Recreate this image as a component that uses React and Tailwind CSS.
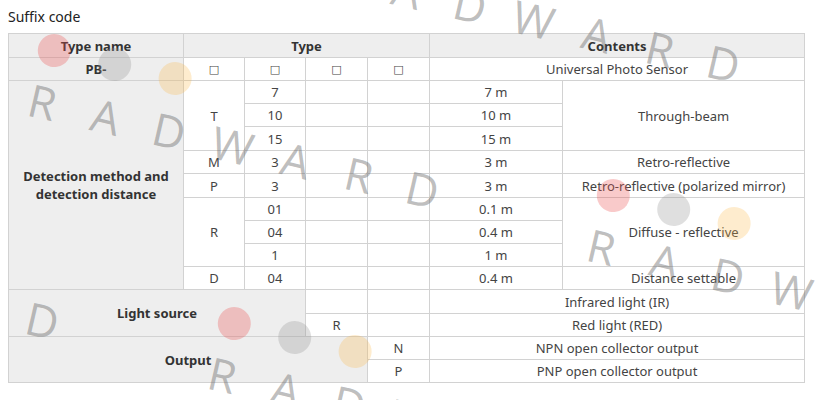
import React from "react";

const cell = "border border-[#d2d2d2] p-0 text-center align-middle";
const gray = "bg-[#eeeeee] font-bold text-[#333]";

const marks = [
  "left-[16px] top-[72px]",
  "left-[575px] top-[217px]",
  "left-[196px] top-[345px]",
  "left-[317px] top-[-54px]",
  "left-[-364px] top-[203px]",
];

const Mark = ({ pos }) => (
  <div className={`absolute ${pos} origin-top-left rotate-[13deg]`}>
    <div className="relative">
      <div className="absolute left-[16px] top-[-46px] flex gap-[29px]">
        <div className="w-[33px] h-[33px] rounded-full bg-[rgba(235,80,80,0.3)]" />
        <div className="w-[33px] h-[33px] rounded-full bg-[rgba(150,150,150,0.3)]" />
        <div className="w-[33px] h-[33px] rounded-full bg-[rgba(250,180,60,0.25)]" />
      </div>
      <div className="flex text-[45px] leading-[46px] text-[rgba(110,110,110,0.45)] font-['Open_Sans',sans-serif]">
        {"RADWARD".split("").map((c, i) => (
          <span key={i} className="w-[65px] text-center">
            {c}
          </span>
        ))}
      </div>
    </div>
  </div>
);

const Box = () => <span className="font-['DejaVu_Sans',sans-serif] text-[11px]">□</span>;

export default function App() {
  return (
    <div className="relative w-[835px] h-[400px] overflow-hidden bg-white font-['Noto_Sans',sans-serif] text-[#444]">
      <div className="pl-2 pt-[8px]">
        <div className="h-[25px] text-[14px] leading-[18px] text-[#222]">Suffix code</div>
        <table className="table-fixed border-collapse w-[796px] text-[13px] leading-[16px]">
          <colgroup>
            <col className="w-[175px]" />
            <col className="w-[61px]" />
            <col className="w-[61px]" />
            <col className="w-[62px]" />
            <col className="w-[62px]" />
            <col className="w-[133px]" />
            <col className="w-[242px]" />
          </colgroup>
          <tbody>
            <tr className="h-[24px]">
              <td className={`${cell} ${gray}`}>Type name</td>
              <td colSpan={4} className={`${cell} ${gray}`}>Type</td>
              <td colSpan={2} className={`${cell} ${gray}`}>Contents</td>
            </tr>
            <tr className="h-[23px]">
              <td className={`${cell} ${gray}`}>PB-</td>
              <td className={cell}><Box /></td>
              <td className={cell}><Box /></td>
              <td className={cell}><Box /></td>
              <td className={cell}><Box /></td>
              <td colSpan={2} className={cell}>Universal Photo Sensor</td>
            </tr>
            <tr className="h-[23px]">
              <td rowSpan={9} className={`${cell} ${gray} leading-[18px]`}>
                Detection method and
                <br />
                detection distance
              </td>
              <td rowSpan={3} className={cell}>T</td>
              <td className={cell}>7</td>
              <td className={cell}></td>
              <td className={cell}></td>
              <td className={cell}>7 m</td>
              <td rowSpan={3} className={cell}>Through-beam</td>
            </tr>
            <tr className="h-[23px]">
              <td className={cell}>10</td>
              <td className={cell}></td>
              <td className={cell}></td>
              <td className={cell}>10 m</td>
            </tr>
            <tr className="h-[24px]">
              <td className={cell}>15</td>
              <td className={cell}></td>
              <td className={cell}></td>
              <td className={cell}>15 m</td>
            </tr>
            <tr className="h-[23px]">
              <td className={cell}>M</td>
              <td className={cell}>3</td>
              <td className={cell}></td>
              <td className={cell}></td>
              <td className={cell}>3 m</td>
              <td className={cell}>Retro-reflective</td>
            </tr>
            <tr className="h-[24px]">
              <td className={cell}>P</td>
              <td className={cell}>3</td>
              <td className={cell}></td>
              <td className={cell}></td>
              <td className={cell}>3 m</td>
              <td className={cell}>Retro-reflective (polarized mirror)</td>
            </tr>
            <tr className="h-[23px]">
              <td rowSpan={3} className={cell}>R</td>
              <td className={cell}>01</td>
              <td className={cell}></td>
              <td className={cell}></td>
              <td className={cell}>0.1 m</td>
              <td rowSpan={3} className={cell}>Diffuse - reflective</td>
            </tr>
            <tr className="h-[23px]">
              <td className={cell}>04</td>
              <td className={cell}></td>
              <td className={cell}></td>
              <td className={cell}>0.4 m</td>
            </tr>
            <tr className="h-[23px]">
              <td className={cell}>1</td>
              <td className={cell}></td>
              <td className={cell}></td>
              <td className={cell}>1 m</td>
            </tr>
            <tr className="h-[23px]">
              <td className={cell}>D</td>
              <td className={cell}>04</td>
              <td className={cell}></td>
              <td className={cell}></td>
              <td className={cell}>0.4 m</td>
              <td className={cell}>Distance settable</td>
            </tr>
            <tr className="h-[24px]">
              <td colSpan={3} rowSpan={2} className={`${cell} ${gray}`}>Light source</td>
              <td className={cell}></td>
              <td className={cell}></td>
              <td colSpan={2} className={cell}>Infrared light (IR)</td>
            </tr>
            <tr className="h-[23px]">
              <td className={cell}>R</td>
              <td className={cell}></td>
              <td colSpan={2} className={cell}>Red light (RED)</td>
            </tr>
            <tr className="h-[23px]">
              <td colSpan={4} rowSpan={2} className={`${cell} ${gray}`}>Output</td>
              <td className={cell}>N</td>
              <td colSpan={2} className={cell}>NPN open collector output</td>
            </tr>
            <tr className="h-[23px]">
              <td className={cell}>P</td>
              <td colSpan={2} className={cell}>PNP open collector output</td>
            </tr>
          </tbody>
        </table>
      </div>
      <div className="pointer-events-none absolute inset-0">
        {marks.map((m, i) => (
          <Mark key={i} pos={m} />
        ))}
      </div>
    </div>
  );
}
